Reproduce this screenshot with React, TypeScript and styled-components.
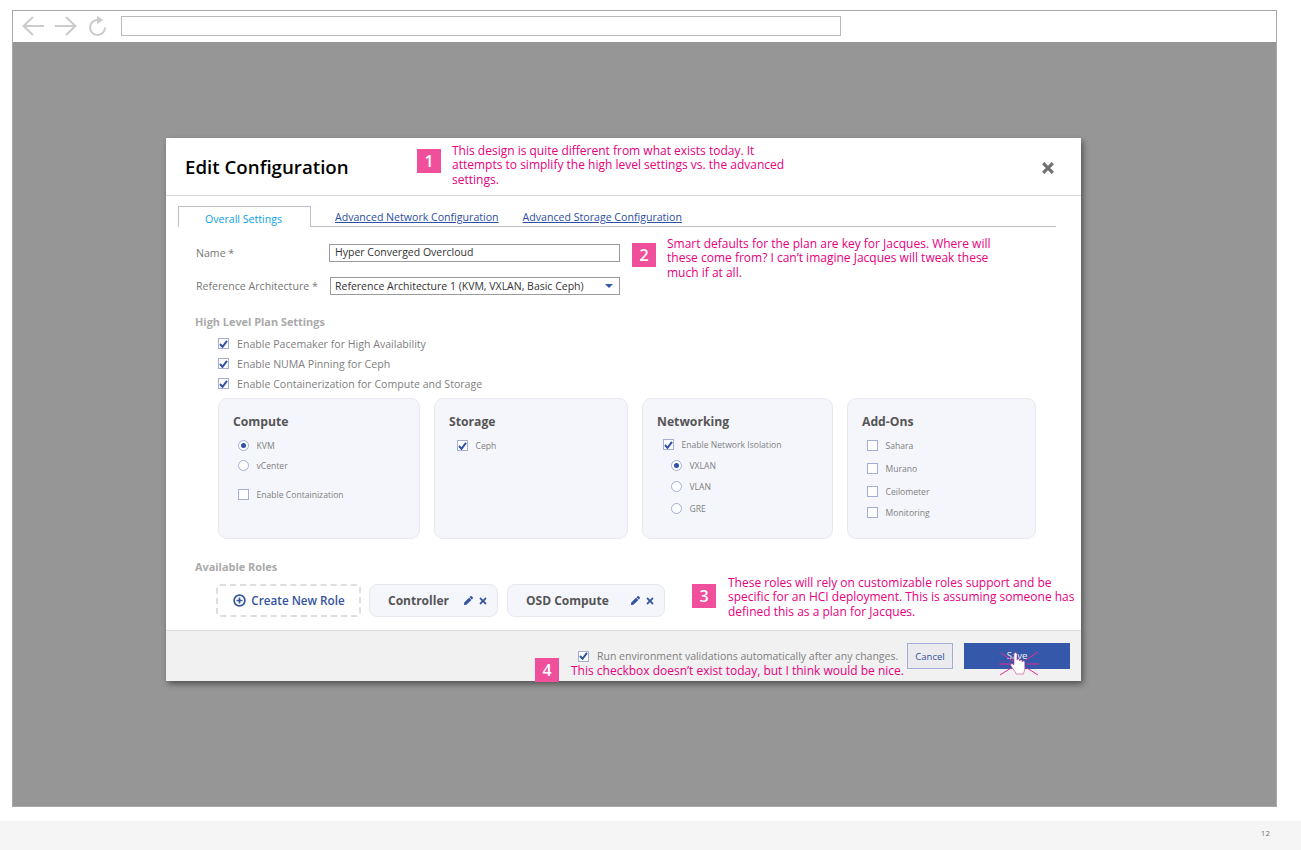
import styled, { createGlobalStyle } from "styled-components";
import { FaPen, FaTimes } from "react-icons/fa";

const GlobalStyle = createGlobalStyle`
  * { box-sizing: border-box; }
  html, body { margin: 0; padding: 0; background: #fff; }
  body { font-family: "Open Sans", "Liberation Sans", sans-serif; }
`;

function BrowserIcons() {
  return (
    <IconGroup>
      <svg width="22" height="20" viewBox="0 0 22 20" fill="none" stroke="#cbcbcb" strokeWidth="2">
        <path d="M22 10H2M11 1l-9.500 9 9.500 9" />
      </svg>
      <svg width="22" height="20" viewBox="0 0 22 20" fill="none" stroke="#cbcbcb" strokeWidth="2">
        <path d="M0 10h20M11 1l9.500 9-9.500 9" />
      </svg>
      <svg width="19" height="20" viewBox="0 0 19 20" fill="none">
        <path d="M17 11.500A7.500 7.500 0 1 1 9.500 4" stroke="#cbcbcb" strokeWidth="2" />
        <path d="M9 0l6.500 4-6.500 4z" fill="#cbcbcb" />
      </svg>
    </IconGroup>
  );
}

function CheckMark() {
  return (
    <svg width="9" height="8" viewBox="0 0 9 8" fill="none" stroke="#2f52a6" strokeWidth="2">
      <path d="M1 4l2.500 2.800L8 .8" />
    </svg>
  );
}

function HandCursor() {
  return (
    <Cursor width="42" height="26" viewBox="0 0 42 26">
      <g stroke="#ea2a8f" strokeWidth="1" fill="none">
        <path d="M3 2l12 8M40 1L28 9M1 13h12M41 13H29M2 24l11-7M40 24l-11-7" />
      </g>
      <path
        d="M16 9.500V3c0-1.700 3-1.700 3 0v6c0-1.500 2.600-1.500 2.600 0v1c0-1.500 2.600-1.500 2.600 0v1c0-1.300 2.600-1.300 2.600.3v6c0 2.500-1 3.200-1.300 5.700h-7.300c-.5-2.300-4-5.500-5.300-8.300-.8-1.800 1.400-2.800 3.100-.7z"
        fill="#fff"
        stroke="#c23a7c"
        strokeWidth="0.6"
      />
    </Cursor>
  );
}

function PlusCircle() {
  return (
    <svg width="13" height="13" viewBox="0 0 13 13" fill="none" stroke="#34549f" strokeWidth="1.700">
      <circle cx="6.500" cy="6.500" r="5.400" />
      <path d="M6.500 3.500v6M3.500 6.500h6" />
    </svg>
  );
}

function CloseMark() {
  return (
    <svg width="12" height="12" viewBox="0 0 12 12" fill="none" stroke="#707070" strokeWidth="3.200">
      <path d="M1.200 1.200l9.600 9.600M10.800 1.200l-9.600 9.600" />
    </svg>
  );
}

type CheckProps = { checked?: boolean; label: string };

function TopCheck({ checked, label }: CheckProps) {
  return (
    <CheckRow>
      <Box>{checked && <CheckMark />}</Box>
      <TopLabel>{label}</TopLabel>
    </CheckRow>
  );
}

type OptionProps = CheckProps & { radio?: boolean; $top: number; $indent?: number };

function CardOption({ checked, label, radio, $top, $indent }: OptionProps) {
  return (
    <OptionRow $top={$top} $indent={$indent}>
      {radio ? <Radio>{checked && <RadioDot />}</Radio> : <Box>{checked && <CheckMark />}</Box>}
      <OptionLabel>{label}</OptionLabel>
    </OptionRow>
  );
}

function RoleChip({ name, $width }: { name: string; $width: number }) {
  return (
    <Chip $width={$width}>
      <ChipName>{name}</ChipName>
      <ChipIcons>
        <FaPen size={9} />
        <FaTimes size={10} />
      </ChipIcons>
    </Chip>
  );
}

export default function App() {
  return (
    <Page>
      <GlobalStyle />
      <BrowserFrame>
        <Toolbar>
          <BrowserIcons />
          <UrlBar />
        </Toolbar>
        <Backdrop>
          <Modal>
            <ModalHeader>
              <Title>Edit Configuration</Title>
              <HeaderNote>
                <Marker>1</Marker>
                <NoteText $width={345}>
                  This design is quite different from what exists today. It attempts to simplify the
                  high level settings vs. the advanced settings.
                </NoteText>
              </HeaderNote>
              <CloseIcon>
                <CloseMark />
              </CloseIcon>
            </ModalHeader>

            <ModalBody>
              <TabBar>
                <ActiveTab>Overall Settings</ActiveTab>
                <TabLink>Advanced Network Configuration</TabLink>
                <TabLink>Advanced Storage Configuration</TabLink>
              </TabBar>

              <FormArea>
                <Fields>
                  <FormRow>
                    <FieldLabel>Name *</FieldLabel>
                    <TextField>Hyper Converged Overcloud</TextField>
                  </FormRow>
                  <SelectRow>
                    <FieldLabel>Reference Architecture *</FieldLabel>
                    <SelectField>
                      Reference Architecture 1 (KVM, VXLAN, Basic Ceph)
                      <Caret />
                    </SelectField>
                  </SelectRow>
                </Fields>
                <FormNote>
                  <Marker $top={6}>2</Marker>
                  <NoteText $width={335}>
                    Smart defaults for the plan are key for Jacques. Where will these come from? I
                    can’t imagine Jacques will tweak these much if at all.
                  </NoteText>
                </FormNote>
              </FormArea>

              <SectionHeading>High Level Plan Settings</SectionHeading>
              <CheckList>
                <TopCheck checked label="Enable Pacemaker for High Availability" />
                <TopCheck checked label="Enable NUMA Pinning for Ceph" />
                <TopCheck checked label="Enable Containerization for Compute and Storage" />
              </CheckList>

              <Cards>
                <Card $width={202}>
                  <CardTitle>Compute</CardTitle>
                  <CardOption radio checked label="KVM" $top={9} $indent={0.5} />
                  <CardOption radio label="vCenter" $top={7} $indent={0.5} />
                  <CardOption label="Enable Containization" $top={16} $indent={0.5} />
                </Card>
                <Card $width={194}>
                  <CardTitle>Storage</CardTitle>
                  <CardOption checked label="Ceph" $top={9} $indent={3.5} />
                </Card>
                <Card $width={191}>
                  <CardTitle>Networking</CardTitle>
                  <CardOption checked label="Enable Network Isolation" $top={8} $indent={1.5} />
                  <CardOption radio checked label="VXLAN" $top={8} $indent={9.5} />
                  <CardOption radio label="VLAN" $top={8} $indent={9.5} />
                  <CardOption radio label="GRE" $top={9} $indent={9.5} />
                </Card>
                <Card $width={189}>
                  <CardTitle>Add-Ons</CardTitle>
                  <CardOption label="Sahara" $top={9} $indent={0.5} />
                  <CardOption label="Murano" $top={10} $indent={0.5} />
                  <CardOption label="Ceilometer" $top={10} $indent={0.5} />
                  <CardOption label="Monitoring" $top={8} $indent={0.5} />
                </Card>
              </Cards>

              <RolesHeading>Available Roles</RolesHeading>
              <RolesRow>
                <CreateRole>
                  <PlusCircle />
                  Create New Role
                </CreateRole>
                <RoleChip name="Controller" $width={129} />
                <RoleChip name="OSD Compute" $width={158} />
                <RolesNote>
                  <Marker $top={8}>3</Marker>
                  <NoteText $width={350}>
                    These roles will rely on customizable roles support and be specific for an HCI
                    deployment. This is assuming someone has defined this as a plan for Jacques.
                  </NoteText>
                </RolesNote>
              </RolesRow>
            </ModalBody>

            <Footer>
              <FooterCheck>
                <Box>
                  <CheckMark />
                </Box>
                <FooterLabel>Run environment validations automatically after any changes.</FooterLabel>
              </FooterCheck>
              <CancelButton>Cancel</CancelButton>
              <SaveButton>
                Save
                <HandCursor />
              </SaveButton>
              <FooterNote>
                <Marker $top={0}>4</Marker>
                <FooterNoteText>This checkbox doesn’t exist today, but I think would be nice.</FooterNoteText>
              </FooterNote>
            </Footer>
          </Modal>
        </Backdrop>
      </BrowserFrame>
      <PageFooter>12</PageFooter>
    </Page>
  );
}

const Page = styled.div`
  width: 1301px;
  height: 850px;
  padding-top: 10px;
  overflow: hidden;
  display: flex;
  flex-direction: column;
`;

const BrowserFrame = styled.div`
  width: 1265px;
  height: 797px;
  margin-left: 12px;
  border: 1px solid #a9a9a9;
  display: flex;
  flex-direction: column;
`;

const Toolbar = styled.div`
  height: 31px;
  flex: none;
  background: #fff;
  display: flex;
  align-items: center;
  padding: 0 0 1px 9px;
`;

const IconGroup = styled.div`
  display: flex;
  align-items: center;
  gap: 11px;
  width: 99px;
  flex: none;
`;

const UrlBar = styled.div`
  width: 720px;
  height: 20px;
  border: 1px solid #b9b9b9;
  background: #fff;
`;

const Backdrop = styled.div`
  flex: 1;
  background: #969696;
  padding: 96px 0 0 153px;
`;

const Modal = styled.div`
  width: 915px;
  height: 543px;
  background: #fff;
  display: flex;
  flex-direction: column;
  box-shadow: 2px 3px 6px rgba(0, 0, 0, 0.45);
`;

const ModalHeader = styled.div`
  height: 58px;
  flex: none;
  border-bottom: 1px solid #d9d9d9;
  display: flex;
  align-items: flex-start;
  padding-left: 19px;
  position: relative;
`;

const Title = styled.h1`
  margin: 17px 0 0;
  width: 232px;
  font-size: 18.700px;
  line-height: 24px;
  font-weight: 600;
  color: #000;
  white-space: nowrap;
`;

const HeaderNote = styled.div`
  display: flex;
  align-items: flex-start;
  gap: 11px;
  padding-top: 6px;
`;

const Marker = styled.div<{ $top?: number }>`
  width: 24px;
  height: 24px;
  flex: none;
  margin-top: ${(p) => p.$top ?? 5}px;
  background: #f0509b;
  color: #fff;
  font-size: 16px;
  font-weight: 600;
  line-height: 24px;
  text-align: center;
`;

const NoteText = styled.div<{ $width: number }>`
  width: ${(p) => p.$width}px;
  color: #e6007e;
  font-size: 12px;
  line-height: 14.300px;
`;

const CloseIcon = styled.div`
  position: absolute;
  right: 27px;
  top: 24px;
  display: flex;
`;

const ModalBody = styled.div`
  flex: 1;
  padding: 10px 0 0 12px;
`;

const TabBar = styled.div`
  width: 878px;
  height: 21px;
  border-bottom: 1px solid #bcc0cc;
  display: flex;
  align-items: flex-start;
`;

const ActiveTab = styled.div`
  width: 133px;
  height: 21px;
  background: #fff;
  border: 1px solid #bcc0cc;
  border-bottom: 0;
  color: #0aa2e2;
  font-size: 10.600px;
  line-height: 25px;
  text-align: center;
  margin-right: 24px;
  padding-right: 2px;
`;

const TabLink = styled.a`
  color: #2d4ea3;
  font-size: 10.600px;
  line-height: 22px;
  text-decoration: underline;
  margin-right: 24px;
  white-space: nowrap;
`;

const FormArea = styled.div`
  display: flex;
  align-items: flex-start;
  height: 80px;
  padding-left: 18px;
`;

const Fields = styled.div`
  width: 436px;
  flex: none;
  padding-top: 16px;
`;

const FormRow = styled.div`
  display: flex;
  align-items: center;
  height: 19px;
`;

const SelectRow = styled(FormRow)`
  margin-top: 14px;
`;

const FieldLabel = styled.div`
  width: 133px;
  flex: none;
  color: #777;
  font-size: 10.600px;
`;

const TextField = styled.div`
  width: 291px;
  height: 18px;
  border: 1px solid #9b9b9b;
  color: #333;
  font-size: 10.500px;
  line-height: 15px;
  padding-left: 5px;
`;

const SelectField = styled(TextField)`
  width: 290px;
  margin-left: 1px;
  padding-left: 4px;
  line-height: 16px;
  position: relative;
`;

const Caret = styled.span`
  position: absolute;
  right: 6px;
  top: 6px;
  width: 0;
  height: 0;
  border-left: 4px solid transparent;
  border-right: 4px solid transparent;
  border-top: 4px solid #3558ab;
`;

const FormNote = styled.div`
  display: flex;
  align-items: flex-start;
  gap: 11px;
  padding-top: 10px;
`;

const SectionHeading = styled.div`
  margin: 8px 0 0 17px;
  color: #aaa;
  font-size: 10.900px;
  font-weight: 700;
  line-height: 14px;
`;

const CheckList = styled.div`
  margin: 7px 0 0 40px;
  display: flex;
  flex-direction: column;
  gap: 5px;
`;

const CheckRow = styled.div`
  display: flex;
  align-items: center;
  height: 15px;
  gap: 8px;
`;

const Box = styled.span`
  width: 11px;
  height: 11px;
  flex: none;
  background: #fff;
  border: 1px solid #a3add6;
  display: flex;
  align-items: center;
  justify-content: center;
`;

const TopLabel = styled.span`
  color: #808080;
  font-size: 10.600px;
  white-space: nowrap;
`;

const Cards = styled.div`
  margin: 7px 0 0 40px;
  display: flex;
  gap: 14px;
`;

const Card = styled.div<{ $width: number }>`
  width: ${(p) => p.$width}px;
  height: 141px;
  background: #f5f6fc;
  border: 1.500px solid #e8e9ee;
  border-radius: 9px;
  padding: 14px 14px 0;
`;

const CardTitle = styled.div`
  color: #555;
  font-size: 12.200px;
  font-weight: 700;
  line-height: 17px;
`;

const OptionRow = styled.div<{ $top: number; $indent?: number }>`
  display: flex;
  align-items: center;
  height: 13px;
  gap: 8px;
  margin-top: ${(p) => p.$top}px;
  margin-left: ${(p) => 4 + (p.$indent ?? 0)}px;
`;

const OptionLabel = styled.span`
  color: #808080;
  font-size: 8.600px;
  white-space: nowrap;
`;

const Radio = styled.span`
  width: 11px;
  height: 11px;
  flex: none;
  border-radius: 50%;
  background: #fff;
  border: 1px solid #a3add6;
  display: flex;
  align-items: center;
  justify-content: center;
`;

const RadioDot = styled.span`
  width: 5px;
  height: 5px;
  border-radius: 50%;
  background: #2f52a6;
`;

const RolesHeading = styled(SectionHeading)`
  margin-top: 21px;
`;

const RolesRow = styled.div`
  margin: 10px 0 0 38px;
  display: flex;
  align-items: flex-start;
  gap: 8px;
  position: relative;
  & > :nth-child(3) {
    margin-left: 1px;
  }
`;

const CreateRole = styled.div`
  width: 145px;
  height: 33px;
  border: 2px dashed #dedede;
  border-radius: 4px;
  display: flex;
  align-items: center;
  justify-content: center;
  gap: 5px;
  padding: 0 0 1px 1px;
  color: #34549f;
  font-size: 11.700px;
  font-weight: 600;
`;

const Chip = styled.div<{ $width: number }>`
  width: ${(p) => p.$width}px;
  height: 33px;
  background: #f5f6fc;
  border: 1.500px solid #e8e9ee;
  border-radius: 8px;
  display: flex;
  align-items: center;
  justify-content: space-between;
  padding: 0 9px 0 18px;
`;

const ChipName = styled.span`
  color: #555;
  font-size: 12px;
  font-weight: 700;
  white-space: nowrap;
`;

const ChipIcons = styled.span`
  display: flex;
  align-items: center;
  gap: 5px;
  color: #34549f;
`;

const RolesNote = styled.div`
  position: absolute;
  left: 476px;
  top: -8px;
  display: flex;
  align-items: flex-start;
  gap: 12px;
  z-index: 1;
`;

const Footer = styled.div`
  height: 51px;
  flex: none;
  background: #f1f1f1;
  border-top: 1px solid #dedede;
  display: flex;
  align-items: flex-start;
  padding: 12px 0 0 412px;
  position: relative;
`;

const FooterCheck = styled.div`
  width: 329px;
  height: 26px;
  display: flex;
  align-items: center;
  gap: 8px;
  flex: none;
`;

const FooterLabel = styled.span`
  color: #808080;
  font-size: 10.500px;
  white-space: nowrap;
`;

const CancelButton = styled.div`
  width: 46px;
  height: 26px;
  background: #ebebef;
  border: 1px solid #a3add6;
  color: #34549f;
  font-size: 9.500px;
  line-height: 25px;
  text-align: center;
  flex: none;
`;

const SaveButton = styled.div`
  width: 106px;
  height: 26px;
  margin-left: 11px;
  background: #3558ab;
  color: #f3f3f3;
  font-size: 9.500px;
  line-height: 25px;
  text-align: center;
  flex: none;
  position: relative;
`;

const Cursor = styled.svg`
  position: absolute;
  left: 34px;
  top: 8px;
`;

const FooterNote = styled.div`
  position: absolute;
  left: 369px;
  top: 27px;
  display: flex;
  align-items: flex-start;
  gap: 12px;
`;

const FooterNoteText = styled.div`
  color: #e6007e;
  font-size: 12px;
  line-height: 14px;
  margin-top: 6px;
  white-space: nowrap;
`;

const PageFooter = styled.div`
  margin-top: 14px;
  height: 29px;
  background: #f5f5f5;
  color: #777;
  font-size: 8px;
  line-height: 24px;
  text-align: right;
  padding-right: 31px;
`;
